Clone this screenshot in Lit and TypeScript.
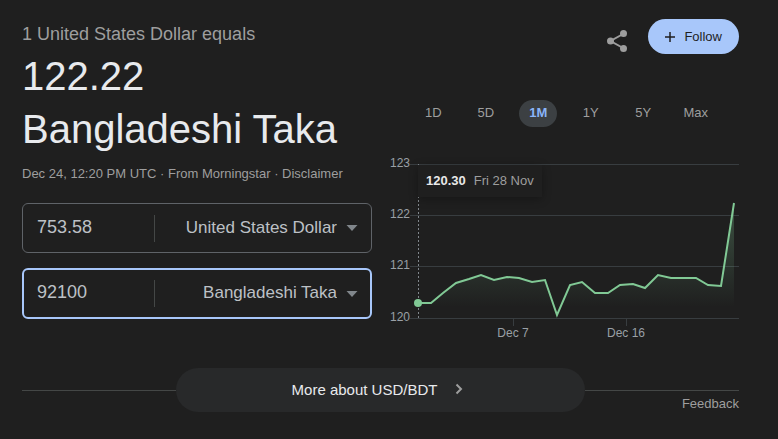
import { LitElement, html, css, svg } from "lit";
import { customElement, property, state } from "lit/decorators.js";

const RATES: number[][] = [
  [29, 148], [42, 148], [54, 138], [67, 128], [80, 124], [92, 120], [105, 125],
  [118, 122], [130, 123], [143, 127], [156, 125], [168, 160], [181, 130],
  [193, 127], [206, 138], [219, 138], [231, 130], [244, 129], [256, 133],
  [269, 120], [282, 123], [294, 123], [307, 123], [319, 130], [332, 131], [345, 48],
];

const GRID = [
  { label: "123", y: 9 },
  { label: "122", y: 60 },
  { label: "121", y: 111 },
  { label: "120", y: 163 },
];

const DATES = [
  { label: "Dec 7", x: 124 },
  { label: "Dec 16", x: 237 },
];

@customElement("currency-field")
export class CurrencyField extends LitElement {
  @property() amount = "";
  @property() currency = "";
  @property({ type: Boolean, reflect: true }) active = false;

  static styles = css`
    :host {
      display: block;
    }
    .field {
      display: flex;
      align-items: center;
      box-sizing: border-box;
      height: 50px;
      padding: 0 13px 0 14px;
      border: 1px solid #5f6368;
      border-radius: 6px;
    }
    :host([active]) .field {
      height: 51px;
      padding: 0 12px 0 13px;
      border: 2px solid #a8c7fa;
    }
    .amount,
    .currency {
      box-sizing: border-box;
      margin: 0;
      padding: 0 0 2px;
      border: 0;
      outline: 0;
      background: transparent;
      color: #bdc1c6;
      font-family: "Liberation Sans", Arial, sans-serif;
    }
    .amount {
      width: 118px;
      height: 27px;
      border-right: 1px solid #444746;
      font-size: 18px;
    }
    .currency {
      flex: 1;
      min-width: 0;
      height: 27px;
      appearance: none;
      font-size: 17px;
      text-align: right;
      text-align-last: right;
    }
    .arrow {
      flex: none;
      width: 12px;
      height: 6px;
      margin-left: 9px;
      fill: #80868b;
    }
  `;

  render() {
    return html`
      <div class="field">
        <input class="amount" type="text" aria-label="Amount" .value=${this.amount} />
        <select class="currency" aria-label="Currency">
          <option>${this.currency}</option>
        </select>
        <svg class="arrow" viewBox="0 0 12 6" aria-hidden="true"><path d="M0.5 0h11L6 6z" /></svg>
      </div>
    `;
  }
}

@customElement("rate-chart")
export class RateChart extends LitElement {
  static styles = css`
    :host {
      display: block;
      position: relative;
      font-family: "Liberation Sans", Arial, sans-serif;
    }
    .plot {
      display: block;
      width: 100%;
      height: auto;
    }
    .grid {
      stroke: #383d40;
      stroke-width: 1;
    }
    .label {
      fill: #9aa0a6;
      font-size: 12px;
    }
    .cursor {
      stroke: #80868b;
      stroke-width: 1;
      stroke-dasharray: 2 2;
    }
    .line {
      fill: none;
      stroke: #81c995;
      stroke-width: 2;
    }
    .dot {
      fill: #81c995;
    }
    .tip {
      position: absolute;
      top: 10px;
      left: 29px;
      display: flex;
      gap: 8px;
      padding: 0 8px;
      line-height: 32px;
      background: #1f1f1f;
      box-shadow: 0 2px 10px rgba(0, 0, 0, 0.3);
      font-size: 13px;
      color: #9e9e9e;
      white-space: nowrap;
    }
    .value {
      color: #e8e8e8;
      font-weight: bold;
    }
  `;

  render() {
    const points = RATES.map((p) => p.join(",")).join(" ");
    return html`
      <svg class="plot" viewBox="0 0 350 190" role="img" aria-label="USD to BDT, past month">
        <defs>
          <linearGradient id="fade" gradientUnits="userSpaceOnUse" x1="0" y1="48" x2="0" y2="152">
            <stop offset="0" stop-color="#81c995" stop-opacity="0.3" />
            <stop offset="1" stop-color="#81c995" stop-opacity="0" />
          </linearGradient>
        </defs>
        ${GRID.map(
          (g) => svg`
            <line class="grid" x1="21" x2="350" y1=${g.y + 0.5} y2=${g.y + 0.5} />
            <text class="label" x="21" y=${g.y + 3} text-anchor="end">${g.label}</text>`
        )}
        ${DATES.map(
          (d) => svg`
            <line class="grid" x1=${d.x + 0.5} x2=${d.x + 0.5} y1="163" y2="171" />
            <text class="label" x=${d.x} y="182" text-anchor="middle">${d.label}</text>`
        )}
        <polygon points="29,152 ${points} 345,152" fill="url(#fade)" />
        <line class="cursor" x1="29.5" x2="29.5" y1="9" y2="163" />
        <polyline class="line" points=${points} />
        <circle class="dot" cx="29" cy="148" r="4" />
      </svg>
      <div class="tip"><span class="value">120.30</span><span>Fri 28 Nov</span></div>
    `;
  }
}

@customElement("app-root")
export class AppRoot extends LitElement {
  @state() private range = "1M";

  static styles = css`
    :host {
      display: block;
      box-sizing: border-box;
      min-height: 100vh;
      padding: 19px 39px 27px 22px;
      background: #1f1f1f;
      color: #9e9e9e;
      font-family: "Liberation Sans", Arial, sans-serif;
      font-size: 13px;
    }
    .columns {
      display: grid;
      grid-template-columns: 1fr 1fr;
      gap: 17px;
    }
    .lead {
      padding-top: 4px;
      font-size: 18px;
      line-height: 22px;
    }
    .rate {
      margin: 5px 0 0;
      color: #e8eaed;
      font-size: 40px;
      font-weight: normal;
      line-height: 53px;
      white-space: nowrap;
    }
    .rate span {
      display: block;
    }
    .source {
      margin-top: 10px;
      line-height: 16px;
      white-space: nowrap;
    }
    .link {
      color: inherit;
      text-decoration: none;
    }
    .fields {
      display: grid;
      gap: 15px;
      margin-top: 21px;
    }
    button {
      margin: 0;
      padding: 0;
      border: 0;
      background: transparent;
      color: inherit;
      font: inherit;
      cursor: pointer;
    }
    .actions {
      display: flex;
      justify-content: flex-end;
      align-items: center;
      gap: 19px;
    }
    .share {
      display: flex;
      padding-top: 8px;
    }
    .share svg {
      width: 24px;
      height: 24px;
      fill: #9e9e9e;
      stroke: #9e9e9e;
    }
    .follow {
      display: flex;
      align-items: center;
      gap: 8px;
      height: 35px;
      padding: 0 17px 0 16px;
      border-radius: 18px;
      background: #a8c7fa;
      color: #1f1f1f;
    }
    .follow svg {
      width: 12px;
      height: 12px;
      stroke: #1f1f1f;
      stroke-width: 1.5;
    }
    .ranges {
      display: grid;
      grid-template-columns: repeat(6, 1fr);
      justify-items: center;
      margin: 46px 17px 28px 18px;
    }
    .range {
      height: 27px;
      padding: 0 10px 2px;
      border-radius: 14px;
    }
    .range.on {
      background: #3c4043;
      color: #8ab4f8;
      font-weight: bold;
    }
    .footer {
      display: grid;
      grid-template-columns: 1fr 57% 1fr;
      margin-top: 23px;
    }
    .rule {
      margin-top: 22px;
      border-top: 1px solid #444746;
      line-height: 26px;
      text-align: right;
    }
    .more {
      display: flex;
      align-items: center;
      justify-content: center;
      gap: 18px;
      height: 44px;
      padding: 0 6px 2px 0;
      border-radius: 22px;
      background: #28292a;
      color: #e8eaed;
      font-size: 15px;
    }
    .more svg {
      width: 8px;
      height: 12px;
      fill: none;
      stroke: #9e9e9e;
      stroke-width: 2;
    }
  `;

  render() {
    return html`
      <main class="columns">
        <section>
          <div class="lead">1 United States Dollar equals</div>
          <h1 class="rate"><span>122.22</span><span>Bangladeshi Taka</span></h1>
          <div class="source">
            Dec 24, 12:20 PM UTC · From Morningstar · <a class="link" href="#disclaimer">Disclaimer</a>
          </div>
          <div class="fields">
            <currency-field amount="753.58" currency="United States Dollar"></currency-field>
            <currency-field active amount="92100" currency="Bangladeshi Taka"></currency-field>
          </div>
        </section>
        <section>
          <div class="actions">
            <button class="share" aria-label="Share">
              <svg viewBox="0 0 24 24">
                <path d="M19 4.5L5.5 12L19 19.5" fill="none" stroke-width="2" />
                <g stroke="none">
                  <circle cx="5.5" cy="12" r="3.5" />
                  <circle cx="18.5" cy="4.5" r="3.5" />
                  <circle cx="18.5" cy="19.5" r="3.5" />
                </g>
              </svg>
            </button>
            <button class="follow">
              <svg viewBox="0 0 12 12" aria-hidden="true"><path d="M6 1v10M1 6h10" /></svg>
              Follow
            </button>
          </div>
          <div class="ranges">
            ${["1D", "5D", "1M", "1Y", "5Y", "Max"].map(
              (r) => html`<button
                class=${r === this.range ? "range on" : "range"}
                aria-pressed=${r === this.range}
                @click=${() => (this.range = r)}
              >${r}</button>`
            )}
          </div>
          <rate-chart></rate-chart>
        </section>
      </main>
      <footer class="footer">
        <div class="rule"></div>
        <button class="more">
          More about USD/BDT
          <svg viewBox="0 0 8 12" aria-hidden="true"><path d="M1.5 1.5L6 6L1.5 10.5" /></svg>
        </button>
        <div class="rule"><a class="link" href="#feedback">Feedback</a></div>
      </footer>
    `;
  }
}
